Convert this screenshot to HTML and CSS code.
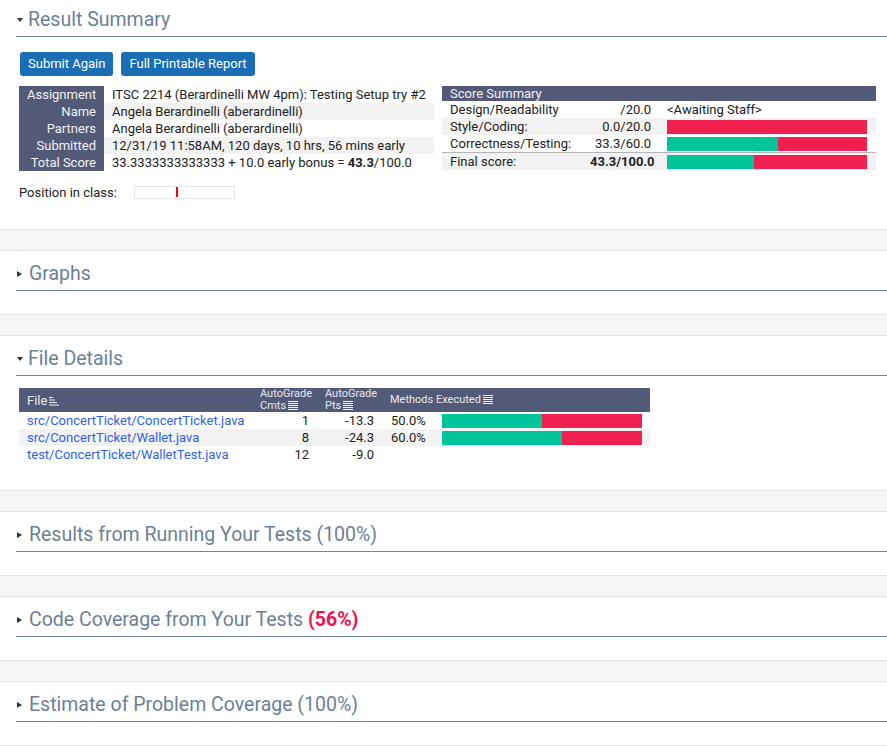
FILE: index.html
```html
<!DOCTYPE html>
<html lang="en">
<head>
<meta charset="utf-8">
<title>Result Summary</title>
<link rel="stylesheet" href="styles.css">
</head>
<body>
<section class="panel panel-first">
  <h2 class="panel-title"><span class="tri tri-down"></span>Result Summary</h2>
  <div class="actions">
    <a class="btn">Submit Again</a>
    <a class="btn">Full Printable Report</a>
  </div>
  <div class="summary">
    <table class="info">
      <tr><th>Assignment</th><td>ITSC 2214 (Berardinelli MW 4pm): Testing Setup try #2</td></tr>
      <tr class="alt"><th>Name</th><td>Angela Berardinelli (aberardinelli)</td></tr>
      <tr><th>Partners</th><td>Angela Berardinelli (aberardinelli)</td></tr>
      <tr class="alt"><th>Submitted</th><td>12/31/19 11:58AM, 120 days, 10 hrs, 56 mins early</td></tr>
      <tr><th>Total Score</th><td>33.3333333333333 + 10.0 early bonus = <b>43.3</b>/100.0</td></tr>
    </table>
    <table class="scores">
      <colgroup><col class="c-label"><col class="c-score"><col class="c-bar"></colgroup>
      <tr class="head"><th colspan="3">Score Summary</th></tr>
      <tr><td>Design/Readability</td><td class="num">/20.0</td><td class="barcell">&lt;Awaiting Staff&gt;</td></tr>
      <tr class="alt"><td>Style/Coding:</td><td class="num">0.0/20.0</td><td class="barcell"><div class="bar"><div class="bad"></div></div></td></tr>
      <tr><td>Correctness/Testing:</td><td class="num">33.3/60.0</td><td class="barcell"><div class="bar"><div class="ok" style="width:55.5%"></div><div class="bad"></div></div></td></tr>
      <tr class="alt final"><td>Final score:</td><td class="num"><b>43.3/100.0</b></td><td class="barcell"><div class="bar"><div class="ok" style="width:43.3%"></div><div class="bad"></div></div></td></tr>
    </table>
  </div>
  <div class="position">
    <span>Position in class:</span>
    <span class="pos-track"><span class="pos-mark"></span></span>
  </div>
</section>

<section class="panel">
  <h2 class="panel-title"><span class="tri tri-right"></span>Graphs</h2>
</section>

<section class="panel">
  <h2 class="panel-title"><span class="tri tri-down"></span>File Details</h2>
  <table class="files">
    <colgroup><col class="f-name"><col class="f-num"><col class="f-num"><col class="f-pct"><col class="f-bar"></colgroup>
    <tr class="fhead">
      <th class="th-file">File<svg class="sort" width="10" height="10" viewBox="0 0 10 10"><rect x="0" y="1" width="4" height="1"/><rect x="0" y="3.5" width="6" height="1"/><rect x="0" y="6" width="8" height="1"/><rect x="0" y="8.5" width="10" height="1"/></svg></th>
      <th class="th-small">AutoGrade<br>Cmts<svg class="sort" width="10" height="10" viewBox="0 0 10 10"><rect x="0" y="1" width="10" height="1"/><rect x="0" y="3" width="10" height="1"/><rect x="0" y="5" width="10" height="1"/><rect x="0" y="7" width="10" height="1"/><rect x="0" y="9" width="10" height="1"/></svg></th>
      <th class="th-small">AutoGrade<br>Pts<svg class="sort" width="10" height="10" viewBox="0 0 10 10"><rect x="0" y="1" width="10" height="1"/><rect x="0" y="3" width="10" height="1"/><rect x="0" y="5" width="10" height="1"/><rect x="0" y="7" width="10" height="1"/><rect x="0" y="9" width="10" height="1"/></svg></th>
      <th class="th-small th-methods" colspan="2">Methods Executed<svg class="sort" width="10" height="10" viewBox="0 0 10 10"><rect x="0" y="1" width="10" height="1"/><rect x="0" y="3" width="10" height="1"/><rect x="0" y="5" width="10" height="1"/><rect x="0" y="7" width="10" height="1"/><rect x="0" y="9" width="10" height="1"/></svg></th>
    </tr>
    <tr>
      <td><a class="flink">src/ConcertTicket/ConcertTicket.java</a></td>
      <td class="num">1</td><td class="num">-13.3</td><td class="pct">50.0%</td>
      <td class="barcell"><div class="bar"><div class="ok" style="width:50%"></div><div class="bad"></div></div></td>
    </tr>
    <tr class="alt">
      <td><a class="flink">src/ConcertTicket/Wallet.java</a></td>
      <td class="num">8</td><td class="num">-24.3</td><td class="pct">60.0%</td>
      <td class="barcell"><div class="bar"><div class="ok" style="width:60%"></div><div class="bad"></div></div></td>
    </tr>
    <tr>
      <td><a class="flink">test/ConcertTicket/WalletTest.java</a></td>
      <td class="num">12</td><td class="num">-9.0</td><td></td><td></td>
    </tr>
  </table>
</section>

<section class="panel">
  <h2 class="panel-title"><span class="tri tri-right"></span>Results from Running Your Tests (100%)</h2>
</section>

<section class="panel">
  <h2 class="panel-title"><span class="tri tri-right"></span>Code Coverage from Your Tests&nbsp;<b class="warn">(56%)</b></h2>
</section>

<section class="panel">
  <h2 class="panel-title"><span class="tri tri-right"></span>Estimate of Problem Coverage (100%)</h2>
</section>
</body>
</html>
```

FILE: styles.css
```css
html {
  overflow: hidden;
}

body {
  margin: 0;
  background: #f5f5f5;
  font-family: Roboto, "Liberation Sans", Arial, sans-serif;
  font-size: 13px;
  color: #222;
}

.panel {
  display: flow-root;
  background: #fff;
  border-top: 1px solid #e4e4ec;
  border-bottom: 1px solid #e4e4ec;
  padding: 0 0 23px 16px;
  margin-bottom: 20px;
}

.panel-first {
  border-top: none;
  margin-top: -3px;
}

.panel-title {
  display: flex;
  align-items: center;
  margin: 11px 0 0 0;
  padding: 0 0 4px 1px;
  border-bottom: 1px solid #6e879b;
  font-size: 19.5px;
  line-height: 24px;
  font-weight: 400;
  color: #6b8196;
}

.tri {
  display: inline-block;
  width: 0;
  height: 0;
  flex: none;
}

.tri-down {
  border-left: 3.5px solid transparent;
  border-right: 3.5px solid transparent;
  border-top: 4.5px solid #333;
  margin-right: 5px;
}

.tri-right {
  border-top: 3.5px solid transparent;
  border-bottom: 3.5px solid transparent;
  border-left: 5px solid #333;
  margin-right: 7px;
}

.warn {
  color: #f0134f;
  font-weight: 700;
}

.actions {
  display: flex;
  gap: 8px;
  margin: 15px 0 0 4px;
}

.btn {
  display: inline-block;
  height: 24px;
  line-height: 24px;
  padding: 0 8px;
  border-radius: 3px;
  background: #1b6db4;
  color: #fff;
  font-size: 13px;
}

.summary {
  display: flex;
  gap: 8px;
  margin: 10px 0 0 3px;
  align-items: flex-start;
}

table {
  border-collapse: collapse;
  border-spacing: 0;
  font-size: 13px;
  line-height: 17px;
}

td, th {
  padding: 0 8px;
  white-space: nowrap;
}

.info {
  width: 415px;
  table-layout: fixed;
}

.info th {
  width: 69px;
  background: #535a77;
  color: #f0f0f4;
  font-weight: 400;
  text-align: right;
}

.info tr.alt td {
  background: #f2f2f2;
}

.scores {
  width: 434px;
  table-layout: fixed;
}

.c-label { width: 140px; }
.c-score { width: 77px; }
.c-bar { width: 217px; }

.scores .head th {
  background: #535a77;
  color: #f0f0f4;
  font-weight: 400;
  text-align: left;
  line-height: 15px;
}

.scores tr.alt td {
  background: #f2f2f2;
}

.scores tr.final td {
  border-top: 1px solid #b5b5b5;
}

.num {
  text-align: right;
}

.barcell {
  vertical-align: middle;
}

.bar {
  display: flex;
  width: 200px;
  height: 14px;
}

.bar .ok {
  background: #00c49a;
}

.bar .bad {
  flex: 1;
  background: #f0214f;
}

.position {
  display: flex;
  align-items: center;
  gap: 17px;
  height: 13px;
  margin: 15px 0 7px 3px;
}

.pos-track {
  position: relative;
  display: inline-block;
  width: 99px;
  height: 11px;
  border: 1px solid #e2e2ea;
}

.pos-mark {
  position: absolute;
  left: 41px;
  top: 0;
  width: 2px;
  height: 10px;
  background: #f00;
}

.files {
  margin: 12px 0 4px 3px;
  width: 631px;
  table-layout: fixed;
}

.f-name { width: 233px; }
.f-num { width: 65px; }
.f-pct { width: 52px; }
.f-bar { width: 216px; }

.fhead th {
  height: 24px;
  padding-top: 0;
  padding-bottom: 0;
  background: #535a77;
  color: #e6e8ef;
  font-weight: 400;
  text-align: left;
  vertical-align: middle;
}

.th-file {
  font-size: 13px;
}

.th-small {
  font-size: 11px;
  line-height: 12px;
}

.sort {
  fill: #eef0f5;
  margin-left: 2px;
  vertical-align: -1px;
}

.files tr.alt td {
  background: #f2f2f2;
}

.files .pct {
  padding-left: 9px;
}

.flink {
  color: #2f62e8;
  text-decoration: none;
}
```
